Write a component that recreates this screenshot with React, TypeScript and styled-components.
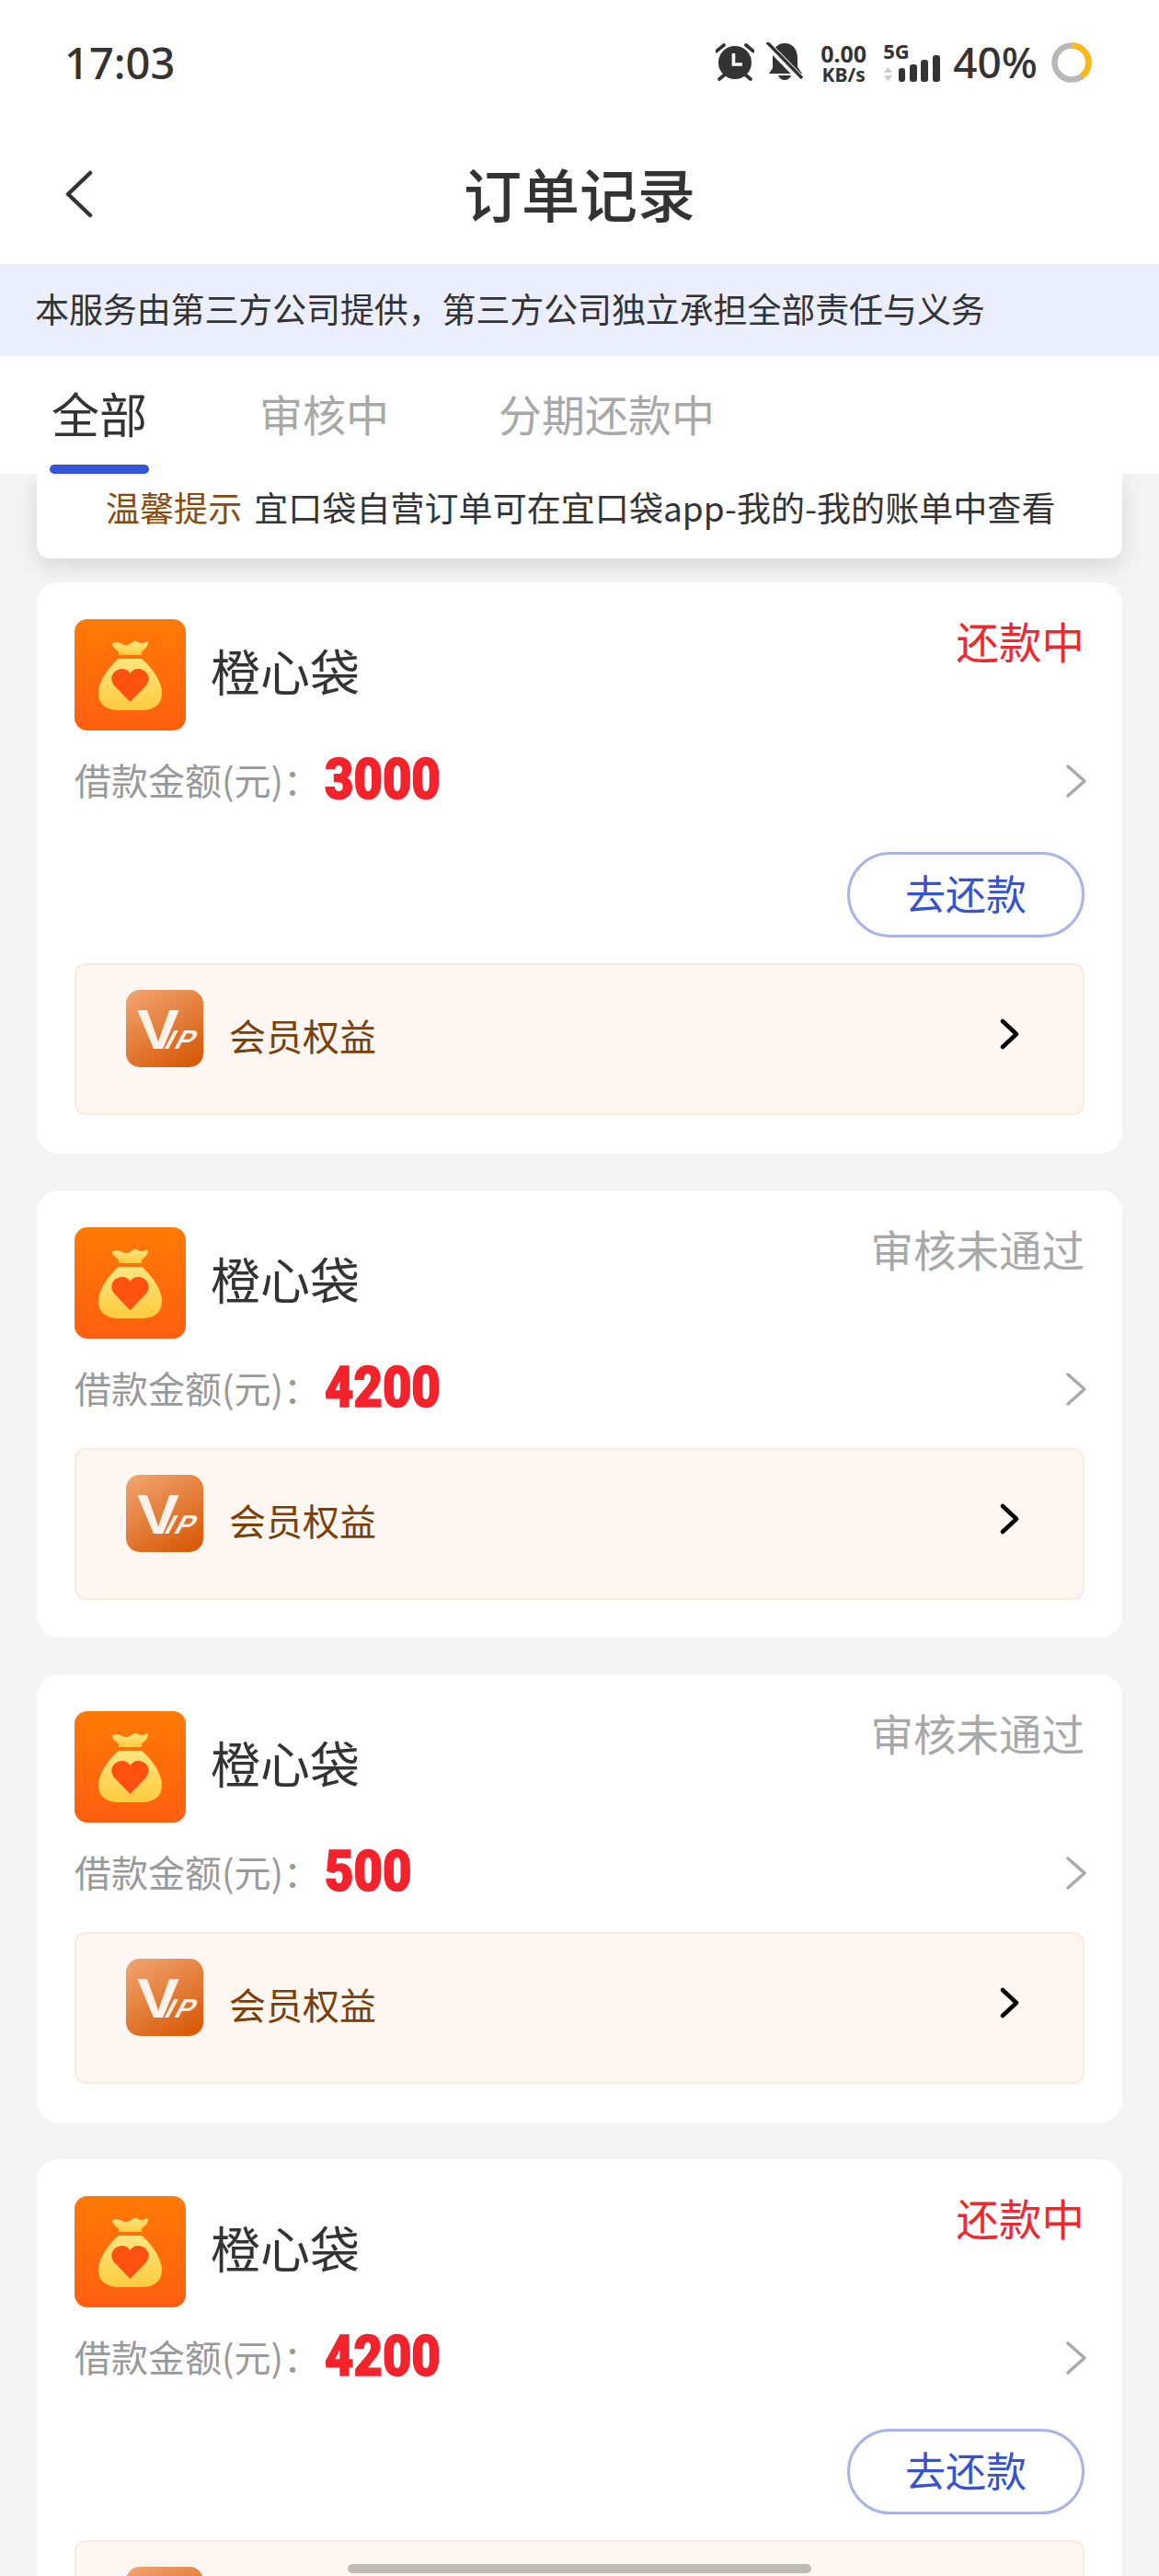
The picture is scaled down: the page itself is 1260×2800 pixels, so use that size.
import React from "react";
import styled, { createGlobalStyle } from "styled-components";

const Global = createGlobalStyle`
  html, body { margin: 0; padding: 0; background: #f4f4f4; }
  * { box-sizing: border-box; }
`;

const CJK = `"Noto Sans CJK SC", "Noto Sans", sans-serif`;

const Page = styled.div`
  position: relative;
  width: 1260px;
  height: 2800px;
  overflow: hidden;
  background: #f4f4f4;
  font-family: ${CJK};
`;
const Top = styled.header`
  background: #fff;
`;
const StatusBar = styled.div`
  height: 135px;
  padding: 0 73px 0 70px;
  display: flex;
  align-items: flex-start;
  justify-content: space-between;
`;
const Time = styled.div`
  margin-top: 37px;
  font: 500 47px/62px "Noto Sans", sans-serif;
  color: #333;
`;
const StatusRight = styled.div`
  margin-top: 46px;
  display: flex;
  align-items: flex-start;
`;
const Speed = styled.div`
  margin: 0 15px 0 14px;
  width: 56px;
  text-align: center;
  font: 700 25px/24px "Noto Sans", sans-serif;
  color: #333;
  small { display: block; font-size: 21px; line-height: 22px; }
`;
const Net = styled.div`
  width: 64px;
  position: relative;
  height: 44px;
`;
const NetLabel = styled.span`
  position: absolute;
  left: 0;
  top: -2px;
  font: 700 22px/22px "Noto Sans", sans-serif;
  color: #333;
`;
const Battery = styled.div`
  margin: -4px 15px 0 12px;
  font: 500 46px/50px "Noto Sans", sans-serif;
  color: #333;
`;
const NavBar = styled.div`
  position: relative;
  height: 152px;
  display: flex;
  align-items: center;
  justify-content: center;
`;
const BackIcon = styled.svg`
  position: absolute;
  left: 68px;
  top: 50px;
`;
const Title = styled.h1`
  margin: 0;
  font: 500 63px/80px ${CJK};
  color: #333;
  transform: translateY(-2px);
`;
const Notice = styled.div`
  height: 100px;
  padding: 0 0 5px 38px;
  display: flex;
  align-items: center;
  background: #ebeefc;
  font-size: 37px;
  letter-spacing: -0.12px;
  color: #333;
`;
const Tabs = styled.nav`
  height: 128px;
  padding-left: 56px;
  display: flex;
  position: relative;
  z-index: 2;
  background: #fff;
`;
const Tab = styled.div<{ $active?: boolean; $gap: number }>`
  position: relative;
  margin-right: ${(p) => p.$gap}px;
  padding-top: 27px;
  font-size: ${(p) => (p.$active ? 52 : 47)}px;
  line-height: 70px;
  color: ${(p) => (p.$active ? "#333" : "#a8a8a8")};
`;
const Indicator = styled.span`
  position: absolute;
  left: -2px;
  right: -2px;
  top: 118px;
  height: 10px;
  border-radius: 5px;
  background: #3553dd;
`;
const Content = styled.main`
  padding: 0 40px;
`;
const Hint = styled.div`
  height: 92px;
  padding: 0 0 20px 75px;
  display: flex;
  align-items: center;
  background: #fff;
  border-radius: 0 0 14px 14px;
  box-shadow: 0 8px 24px rgba(0, 0, 0, 0.12);
  font-size: 37px;
  letter-spacing: 0.06px;
  color: #333;
  white-space: nowrap;
  b { font-weight: 400; color: #8a4a10; margin-right: 13px; }
`;
const Cards = styled.div`
  margin-top: 26px;
  display: flex;
  flex-direction: column;
  gap: 40px;
`;
const Card = styled.article`
  padding: 40px 41px 41.5px;
  background: #fff;
  border-radius: 24px;
`;
const Head = styled.div`
  display: flex;
  align-items: flex-start;
`;
const Brand = styled.div`
  margin: 17px auto 0 27px;
  font-size: 54px;
  line-height: 78px;
  color: #333;
`;
const Status = styled.div<{ $tone: "red" | "gray" }>`
  margin-top: -9px;
  font-size: 46.5px;
  line-height: 64px;
  color: ${(p) => (p.$tone === "red" ? "#f0282d" : "#a8a8a8")};
`;
const AmountRow = styled.div`
  height: 106px;
  margin-bottom: 13px;
  display: flex;
  align-items: center;
  justify-content: space-between;
`;
const Label = styled.span`
  width: 272px;
  font-size: 40px;
  white-space: nowrap;
  color: #999;
`;
const Amount = styled.strong`
  display: inline-block;
  margin-right: auto;
  transform: scaleX(0.875);
  transform-origin: left center;
  -webkit-text-stroke: 1.6px #f4222b;
  font: 900 62px/70px Roboto, sans-serif;
  color: #f4222b;
`;
const RowArrow = styled.svg`
  margin: 4px -3px 0 0;
`;
const Actions = styled.div`
  display: flex;
  justify-content: flex-end;
  margin: 26px 0 28px;
`;
const PayButton = styled.button`
  width: 258px;
  height: 93px;
  padding: 0 0 5px;
  border: 3px solid #aab5e6;
  border-radius: 47px;
  background: #fff;
  font: 400 44px/1 ${CJK};
  color: #3553d0;
`;
const VipRow = styled.div`
  height: 165px;
  padding: 27px 68px 0 54px;
  display: flex;
  align-items: flex-start;
  background: #fef6f0;
  border: 2px solid #fbeadf;
  border-radius: 12px;
`;
const VipLabel = styled.span`
  margin: 20px auto 0 28px;
  font-size: 40px;
  line-height: 58px;
  color: #7d3f08;
`;
const VipArrow = styled.svg`
  margin-top: 31px;
`;
const HomeBar = styled.div`
  position: absolute;
  left: 378px;
  bottom: 3px;
  width: 504px;
  height: 10px;
  border-radius: 5px;
  background: #bfbab4;
`;

const BagIcon = ({ id }: { id: string }) => (
  <svg width="121" height="121" viewBox="0 0 121 121" style={{ flex: "none" }}>
    <defs>
      <linearGradient id={`o${id}`} x1="0" y1="0" x2="0" y2="1">
        <stop offset="0" stopColor="#ff7a05" />
        <stop offset="1" stopColor="#ff5f10" />
      </linearGradient>
      <linearGradient id={`y${id}`} x1="0" y1="0" x2="0" y2="1">
        <stop offset="0" stopColor="#ffe680" />
        <stop offset="1" stopColor="#ffcb3e" />
      </linearGradient>
    </defs>
    <rect width="121" height="121" rx="14" fill={`url(#o${id})`} />
    <path d="M42 26c5-2 9 1 13 2 4 1 7-3 10-4 3-1 5 3 9 2 3-1 6-3 6 0 0 4-5 7-7 10v3H48v-3c-2-3-6-5-7-8-.3-1 0-2 1-2Z" fill={`url(#y${id})`} />
    <path d="M48 43h25C84 52 95 68 95 80 95 94 85 99 72 99H49C36 99 26 94 26 80 26 68 37 52 48 43Z" fill={`url(#y${id})`} />
    <path d="M60.500 90 45 74c-10-10-2-20 7-20 4 0 7 2 8.500 5 1.500-3 4.500-5 8.500-5 9 0 17 10 7 20L60.500 90Z" fill="#ff5210" />
  </svg>
);

const VipIcon = ({ id }: { id: string }) => (
  <svg width="84" height="84" viewBox="0 0 84 84" style={{ flex: "none" }}>
    <defs>
      <linearGradient id={`v${id}`} x1="0.2" y1="0" x2="0.8" y2="1">
        <stop offset="0" stopColor="#f0a06a" />
        <stop offset="1" stopColor="#d75a08" />
      </linearGradient>
    </defs>
    <rect width="84" height="84" rx="15" fill={`url(#v${id})`} />
    <text x="12" y="64" fontFamily="Liberation Sans" fontWeight="700" fontSize="62" fill="#fdf3ea" textLength="46" lengthAdjust="spacingAndGlyphs">V</text>
    <text x="74" y="64" transform="skewX(-28)" fontFamily="Liberation Sans" fontWeight="700" fontSize="29" fill="#fdf3ea" textLength="30" lengthAdjust="spacing">IP</text>
  </svg>
);

const AlarmIcon = () => (
  <svg width="42" height="42" viewBox="0 0 42 42" fill="none">
    <circle cx="21" cy="22" r="18" fill="#333" />
    <path d="M1 9.500 9 3M41 9.500 33 3M4 40l6-5M38 40l-6-5" stroke="#333" strokeWidth="3.6" strokeLinecap="round" />
    <path d="M19.500 12v12H29" stroke="#fff" strokeWidth="3.6" />
  </svg>
);

const BellOffIcon = () => (
  <svg width="42" height="42" viewBox="0 0 42 42" style={{ marginLeft: 13 }}>
    <path d="M20 1c10 0 14 8 14 16v10l5 7H3l4-6V16C7 8 11 1 20 1Z" fill="#333" />
    <path d="M13 36h14c-1 3-4 5-7 5s-6-2-7-5Z" fill="#333" />
    <path d="M0 1 38 40" stroke="#fff" strokeWidth="8" />
    <path d="M1 0 39 39" stroke="#333" strokeWidth="3.4" />
  </svg>
);

const SignalIcon = () => (
  <svg width="64" height="44" viewBox="0 0 64 44">
    <path d="M5.500 27 10 33H1ZM5.500 43 10 36H1Z" fill="#ccc" />
    <rect x="17" y="28" width="7" height="15" rx="3" fill="#333" />
    <rect x="29" y="24" width="8" height="19" rx="3" fill="#333" />
    <rect x="41" y="19" width="8" height="24" rx="3" fill="#333" />
    <rect x="54" y="14" width="8" height="29" rx="3" fill="#333" />
  </svg>
);

const RingIcon = () => (
  <svg width="44" height="44" viewBox="0 0 44 44" fill="none">
    <circle cx="22" cy="22" r="18.500" stroke="#b8b8b8" strokeWidth="6.500" />
    <circle cx="22" cy="22" r="18.500" stroke="#fbb917" strokeWidth="6.500" pathLength={100} strokeDasharray="40 60" transform="rotate(-90 22 22)" />
  </svg>
);

type Order = { status: string; tone: "red" | "gray"; amount: string; pay?: boolean };
const orders: Order[] = [
  { status: "还款中", tone: "red", amount: "3000", pay: true },
  { status: "审核未通过", tone: "gray", amount: "4200" },
  { status: "审核未通过", tone: "gray", amount: "500" },
  { status: "还款中", tone: "red", amount: "4200", pay: true },
];

export default function App() {
  return (
    <Page>
      <Global />
      <Top>
        <StatusBar>
          <Time>17:03</Time>
          <StatusRight>
            <AlarmIcon />
            <BellOffIcon />
            <Speed>
              0.00
              <small>KB/s</small>
            </Speed>
            <Net>
              <NetLabel>5G</NetLabel>
              <SignalIcon />
            </Net>
            <Battery>40%</Battery>
            <RingIcon />
          </StatusRight>
        </StatusBar>
        <NavBar>
          <BackIcon width="36" height="52" viewBox="0 0 36 52" fill="none">
            <path d="M30 3 6 26l24 23" stroke="#333" strokeWidth="4.500" strokeLinecap="round" strokeLinejoin="round" />
          </BackIcon>
          <Title>订单记录</Title>
        </NavBar>
        <Notice>本服务由第三方公司提供，第三方公司独立承担全部责任与义务</Notice>
        <Tabs>
          <Tab $active $gap={122}>
            全部
            <Indicator />
          </Tab>
          <Tab $gap={119}>审核中</Tab>
          <Tab $gap={0}>分期还款中</Tab>
        </Tabs>
      </Top>
      <Content>
        <Hint>
          <b>温馨提示</b>
          宜口袋自营订单可在宜口袋app-我的-我的账单中查看
        </Hint>
        <Cards>
          {orders.map((o, i) => (
            <Card key={i}>
              <Head>
                <BagIcon id={String(i)} />
                <Brand>橙心袋</Brand>
                <Status $tone={o.tone}>{o.status}</Status>
              </Head>
              <AmountRow>
                <Label>借款金额(元)：</Label>
                <Amount>{o.amount}</Amount>
                <RowArrow width="24" height="38" viewBox="0 0 24 38" fill="none">
                  <path d="M3 3l18 16L3 35" stroke="#aaa" strokeWidth="3.500" strokeLinecap="round" strokeLinejoin="round" />
                </RowArrow>
              </AmountRow>
              {o.pay && (
                <Actions>
                  <PayButton>去还款</PayButton>
                </Actions>
              )}
              <VipRow>
                <VipIcon id={String(i)} />
                <VipLabel>会员权益</VipLabel>
                <VipArrow width="22" height="34" viewBox="0 0 22 34" fill="none">
                  <path d="M3 3l15 14L3 31" stroke="#000" strokeWidth="4.500" strokeLinecap="round" strokeLinejoin="round" />
                </VipArrow>
              </VipRow>
            </Card>
          ))}
        </Cards>
      </Content>
      <HomeBar />
    </Page>
  );
}
